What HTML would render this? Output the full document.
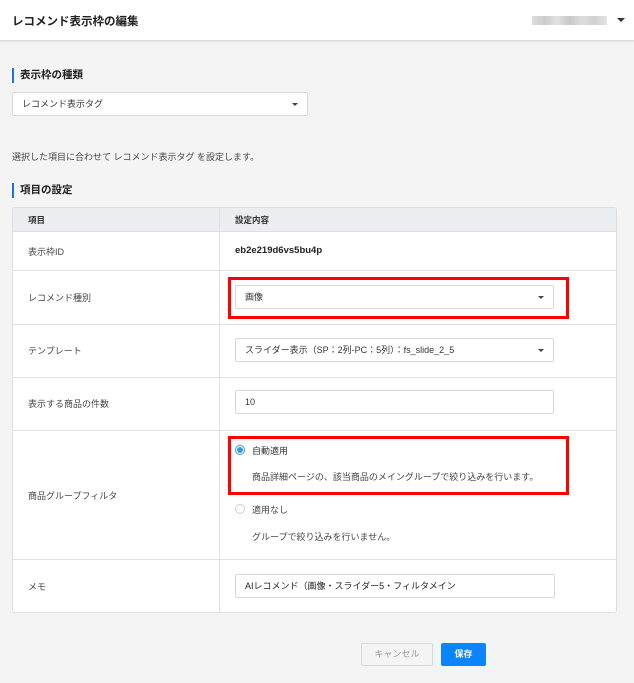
<!DOCTYPE html>
<html><head><meta charset="utf-8"><style>
*{box-sizing:border-box;margin:0;padding:0}
body{width:634px;height:683px;background:#f4f4f4;font-family:"Liberation Sans","Noto Sans CJK JP",sans-serif;color:#333;position:relative;overflow:hidden;font-size:9px}
.a{position:absolute}
.hdr{left:0;top:0;width:634px;height:41px;background:#fff;border-bottom:1px solid #ddd;box-shadow:0 1px 2px rgba(0,0,0,.08)}
.h2{font-size:10.5px;font-weight:bold;color:#222;padding-left:6px;border-left:2px solid #1a73e8;line-height:15px}
.sel{background:#fff;border:1px solid #d8d8d8;border-radius:2px;height:24px;line-height:22px;padding-left:9px;font-size:9px;color:#333}
.sel:after{content:"";position:absolute;right:9px;top:10px;border:3px solid transparent;border-top:3px solid #444}
.noarr:after{display:none}
.tbl{left:12px;top:207px;width:605px;height:406px;background:#fff;border:1px solid #ddd;border-radius:3px;overflow:hidden}
.line{left:0;width:605px;height:1px;background:#e0e0e0}
.lbl{left:15px;font-size:9px;color:#444}
.red{border:3px solid #f00}
.radio{width:10px;height:10px;border-radius:50%;border:1px solid #ccc;background:#fff}
</style></head><body>
<div class="a hdr"></div>
<div class="a" style="left:12px;top:13px;font-size:11.5px;font-weight:bold;color:#222">レコメンド表示枠の編集</div>
<div class="a" style="left:532px;top:16px;width:75px;height:9px;background:linear-gradient(90deg,#ddd,#ccc,#e2e2e2,#c8c8c8,#ddd,#d0d0d0,#e4e4e4)"></div>
<div class="a" style="left:617px;top:18px;border:4px solid transparent;border-top:4px solid #333"></div>

<div class="a h2" style="left:12px;top:68px">表示枠の種類</div>
<div class="a sel" style="left:12px;top:92px;width:296px">レコメンド表示タグ</div>
<div class="a" style="left:12px;top:150px;color:#444">選択した項目に合わせて レコメンド表示タグ を設定します。</div>
<div class="a h2" style="left:12px;top:183px">項目の設定</div>

<div class="a tbl">
 <div class="a" style="left:0;top:0;width:605px;height:23px;background:#ebedf1"></div>
 <div class="a" style="left:206px;top:0;width:1px;height:406px;background:#e0e0e0"></div>
 <div class="a line" style="top:23px"></div>
 <div class="a line" style="top:62px"></div>
 <div class="a line" style="top:116px"></div>
 <div class="a line" style="top:169px"></div>
 <div class="a line" style="top:222px"></div>
 <div class="a line" style="top:351px"></div>
 <div class="a" style="left:15px;top:6px;font-weight:bold;font-size:8.5px">項目</div>
 <div class="a" style="left:222px;top:6px;font-weight:bold;font-size:8.5px">設定内容</div>
 <div class="a lbl" style="top:37px">表示枠ID</div>
 <div class="a lbl" style="top:83px">レコメンド種別</div>
 <div class="a lbl" style="top:136px">テンプレート</div>
 <div class="a lbl" style="top:189px">表示する商品の件数</div>
 <div class="a lbl" style="top:281px">商品グループフィルタ</div>
 <div class="a lbl" style="top:372px">メモ</div>
 <div class="a" style="left:222px;top:37px;font-weight:bold;font-size:9.5px;color:#222">eb2e219d6vs5bu4p</div>
</div>

<div class="a red" style="left:228px;top:277px;width:341px;height:42px"></div>
<div class="a sel" style="left:235px;top:285px;width:319px">画像</div>
<div class="a sel" style="left:235px;top:338px;width:319px">スライダー表示（SP：2列-PC：5列）：fs_slide_2_5</div>
<div class="a sel noarr" style="left:235px;top:390px;width:319px">10</div>
<div class="a red" style="left:228px;top:436px;width:341px;height:59px"></div>
<div class="a radio" style="left:235px;top:445px;border-color:#3a9ad9"><div style="width:6px;height:6px;margin:1px;border-radius:50%;background:#3a9ad9"></div></div>
<div class="a" style="left:252px;top:444px;color:#333">自動適用</div>
<div class="a" style="left:252px;top:470px;color:#444">商品詳細ページの、該当商品のメイングループで絞り込みを行います。</div>
<div class="a radio" style="left:235px;top:504px"></div>
<div class="a" style="left:252px;top:503px;color:#444">適用なし</div>
<div class="a" style="left:252px;top:530px;color:#444">グループで絞り込みを行いません。</div>
<div class="a" style="left:235px;top:574px;width:320px;height:24px;background:#fff;border:1px solid #d8d8d8;border-radius:2px;line-height:22px;padding-left:9px;color:#222">AIレコメンド（画像・スライダー5・フィルタメイン</div>

<div class="a" style="left:361px;top:643px;width:72px;height:23px;border:1px solid #d8d8d8;background:#f4f4f4;color:#999;text-align:center;line-height:21px;border-radius:2px">キャンセル</div>
<div class="a" style="left:441px;top:643px;width:45px;height:23px;background:#0a84ff;color:#fff;font-weight:bold;text-align:center;line-height:23px;border-radius:2px">保存</div>
</body></html>
